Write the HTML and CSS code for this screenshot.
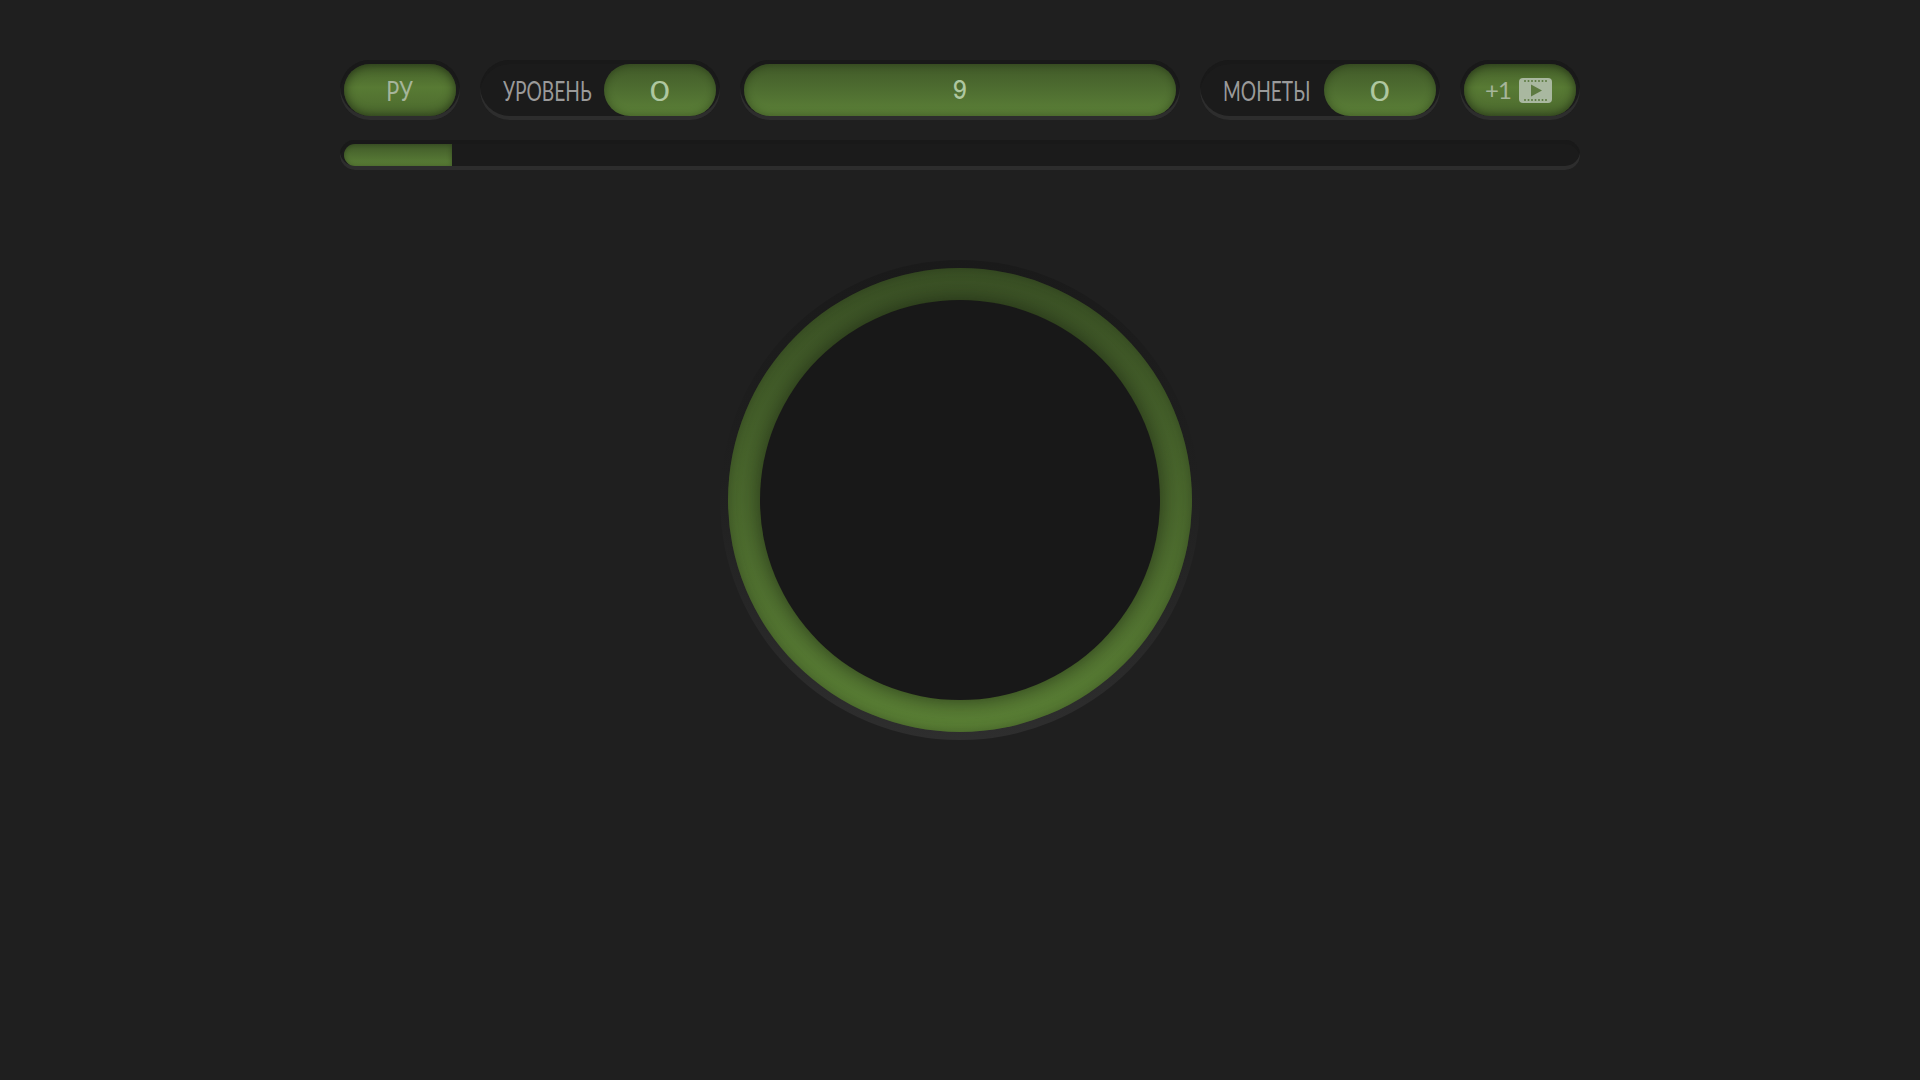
FILE: index.html
```html
<!DOCTYPE html>
<html lang="ru">
<head>
<meta charset="utf-8">
<title>Игра</title>
<link rel="stylesheet" href="styles.css">
</head>
<body>
<main class="game">
  <header class="top">
    <div class="well btn-well"><button class="pill pill-raised"><span class="txt">РУ</span></button></div>
    <div class="well stat">
      <span class="label">УРОВЕНЬ</span>
      <div class="pill pill-value"><span class="digit">0</span></div>
    </div>
    <div class="well wide"><div class="pill pill-value"><span class="digit nine">9</span></div></div>
    <div class="well stat">
      <span class="label">МОНЕТЫ</span>
      <div class="pill pill-value"><span class="digit">0</span></div>
    </div>
    <div class="well btn-well">
      <button class="pill pill-raised">
        <span class="txt plus">+1</span>
        <svg class="film" viewBox="0 0 33 25" aria-hidden="true">
          <rect width="33" height="25" rx="4" fill="#a9b8a0"/>
          <g fill="#5d7a40">
            <circle cx="6" cy="3" r="1"/><circle cx="9.5" cy="3" r="1"/><circle cx="13" cy="3" r="1"/><circle cx="16.5" cy="3" r="1"/><circle cx="20" cy="3" r="1"/><circle cx="23.5" cy="3" r="1"/><circle cx="27" cy="3" r="1"/>
            <circle cx="6" cy="22" r="1"/><circle cx="9.5" cy="22" r="1"/><circle cx="13" cy="22" r="1"/><circle cx="16.5" cy="22" r="1"/><circle cx="20" cy="22" r="1"/><circle cx="23.5" cy="22" r="1"/><circle cx="27" cy="22" r="1"/>
            <path d="M12 6.5 L23 12.5 L12 18.5 Z"/>
          </g>
        </svg>
      </button>
    </div>
  </header>
  <div class="track"><div class="fill"></div></div>
  <div class="dial"><div class="ring"><div class="hole"></div></div></div>
</main>
</body>
</html>
```

FILE: styles.css
```css
* { box-sizing: border-box; }
html, body { margin: 0; height: 100%; }
body {
  background: #1f1f1f;
  font-family: "Lato", "Liberation Sans", sans-serif;
  color: #999;
  overflow: hidden;
}
.game {
  width: 1240px;
  margin: 0 auto;
  padding-top: 60px;
  display: flex;
  flex-direction: column;
  align-items: center;
}
.top {
  width: 100%;
  display: flex;
  gap: 20px;
}
.well {
  height: 60px;
  padding: 4px;
  border-radius: 30px;
  display: flex;
  justify-content: flex-end;
  align-items: stretch;
  background: #1b1b1b;
  box-shadow: inset 0 -4px 0 #2d2d2d, inset 0 4px 0 #191919;
}
.btn-well { width: 120px; }
.stat { width: 240px; justify-content: space-between; align-items: center; }
.wide { width: 440px; }
.pill {
  flex: none;
  width: 112px;
  height: 52px;
  border: 0;
  padding: 0;
  border-radius: 26px;
  display: flex;
  justify-content: center;
  align-items: center;
  font: inherit;
}
.wide .pill { width: 432px; }
.pill-raised {
  gap: 8px;
  background: linear-gradient(180deg, #45602a 0%, #587a34 45%, #4c6a2e 100%);
  box-shadow: inset 0 0 11px rgba(20, 28, 12, .75);
}
.pill-value {
  align-self: stretch;
  background: linear-gradient(180deg, #415a29 0%, #5c8138 100%);
  box-shadow: inset 0 0 9px rgba(20, 28, 12, .45);
}
.label {
  margin-left: 19px;
  width: 88px;
  white-space: nowrap;
  font-size: 27px;
  line-height: 1;
  color: #9a9a9a;
  transform: scaleX(.71);
  transform-origin: left center;
}
.txt {
  display: inline-block;
  font-size: 27px;
  line-height: 1;
  color: #a6b59b;
  transform: scaleX(.8);
}
.plus { font-size: 24px; letter-spacing: -1px; transform: none; }
.digit {
  display: inline-block;
  font-size: 27px;
  line-height: 1;
  color: #aec7a0;
  transform: scaleX(1.25);
}
.nine { font-family: "Inter", "Lato", sans-serif; font-size: 25px; font-weight: 500; transform: scaleX(.9); }
.film { width: 33px; height: 25px; flex: none; margin-right: 3px; }
.track {
  width: 100%;
  height: 30px;
  margin-top: 20px;
  padding: 4px;
  border-radius: 15px;
  background: #1b1b1b;
  box-shadow: inset 0 -4px 0 #2d2d2d, inset 0 4px 0 #191919;
}
.fill {
  width: 108px;
  height: 22px;
  border-radius: 11px 0 0 11px;
  background: linear-gradient(180deg, #415a29 0%, #5c8138 100%);
  box-shadow: inset 0 0 5px rgba(20, 28, 12, .4);
}
.dial {
  width: 480px;
  height: 480px;
  margin-top: 90px;
  padding: 8px;
  border-radius: 50%;
  background: linear-gradient(180deg, #1a1a1a 0%, #1f1f1f 45%, #2e2e2e 100%);
}
.ring {
  width: 100%;
  height: 100%;
  padding: 32px;
  border-radius: 50%;
  background: linear-gradient(180deg, #3a5025 0%, #5a7f35 100%);
  box-shadow: inset 0 0 12px rgba(20, 28, 12, .35);
}
.hole {
  width: 100%;
  height: 100%;
  border-radius: 50%;
  background: #181818;
  box-shadow: 0 0 20px rgba(15, 20, 10, .6);
}
```
